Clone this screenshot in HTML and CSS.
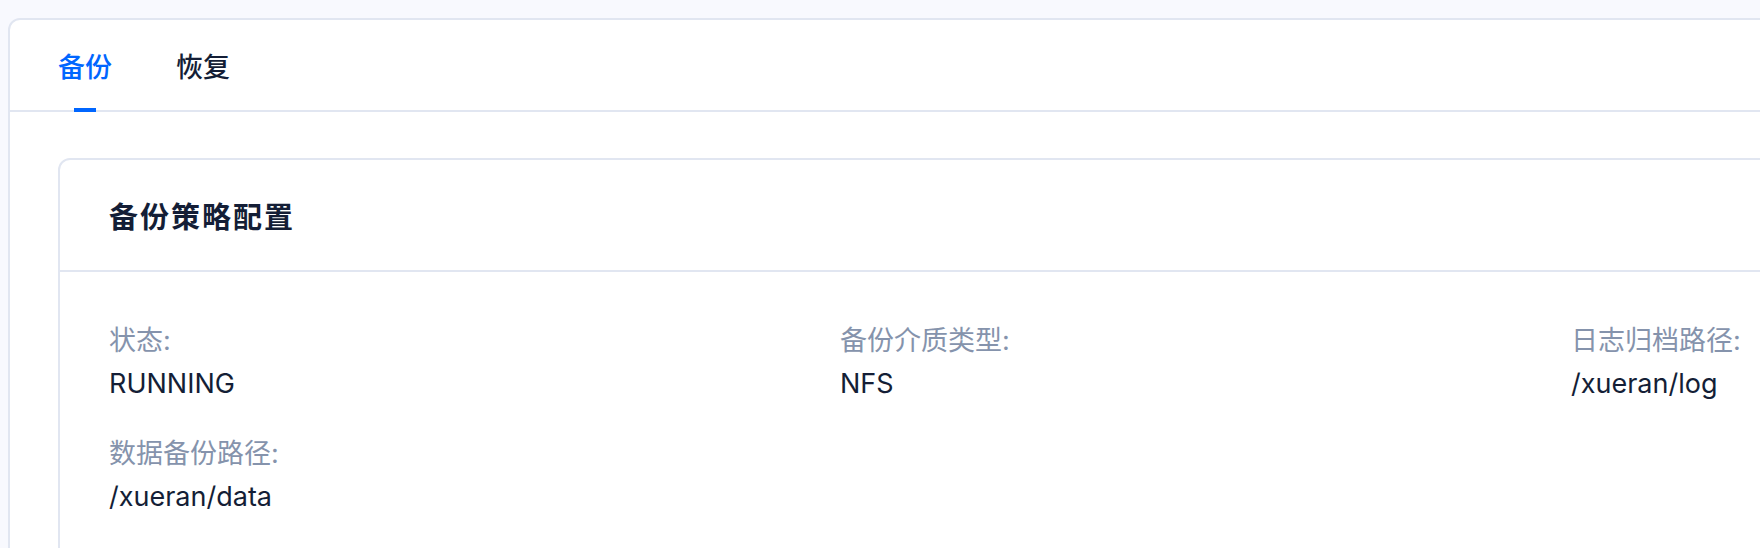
FILE: index.html
```html
<!DOCTYPE html>
<html lang="zh-CN">
<head>
<meta charset="utf-8">
<title>备份</title>
<link rel="stylesheet" href="styles.css">
</head>
<body>
<div class="panel">
  <div class="tabs">
    <div class="tab active">备份</div>
    <div class="tab">恢复</div>
  </div>
  <div class="content">
    <div class="card">
      <div class="card-header">
        <h2 class="card-title">备份策略配置</h2>
      </div>
      <div class="card-body">
        <div class="field">
          <div class="label">状态:</div>
          <div class="value">RUNNING</div>
        </div>
        <div class="field">
          <div class="label">备份介质类型:</div>
          <div class="value">NFS</div>
        </div>
        <div class="field">
          <div class="label">日志归档路径:</div>
          <div class="value">/xueran/log</div>
        </div>
        <div class="field">
          <div class="label">数据备份路径:</div>
          <div class="value">/xueran/data</div>
        </div>
      </div>
    </div>
  </div>
</div>
</body>
</html>
```

FILE: styles.css
```css
html, body {
  margin: 0;
  padding: 0;
  overflow: hidden;
}
body {
  background: #f8f9fe;
  padding: 18px 0 0 8px;
  font-family: "Inter", "Noto Sans CJK SC", sans-serif;
  color: #141e36;
  height: 548px;
  box-sizing: border-box;
}
.panel {
  width: 2400px;
  min-height: 600px;
  background: #ffffff;
  border: 2px solid #e1e6f1;
  border-radius: 12px;
}
.tabs {
  display: flex;
  gap: 64px;
  padding: 0 48px;
  height: 90px;
  border-bottom: 2px solid #e1e6f1;
}
.tab {
  position: relative;
  font-size: 27px;
  font-weight: 500;
  line-height: 90px;
  padding-top: 3px;
  box-sizing: border-box;
  height: 90px;
  color: #141e36;
}
.tab.active {
  color: #0066ff;
}
.tab.active::after {
  content: "";
  position: absolute;
  left: 50%;
  bottom: -2px;
  width: 22px;
  height: 4px;
  margin-left: -11px;
  background: #0066ff;
}
.content {
  padding: 46px 48px;
}
.card {
  border: 2px solid #e1e6f1;
  border-radius: 12px;
  background: #ffffff;
}
.card-header {
  height: 110px;
  display: flex;
  align-items: center;
  padding: 0 49px;
  border-bottom: 2px solid #e1e6f1;
}
.card-title {
  margin: 0;
  font-size: 29px;
  font-weight: 700;
  letter-spacing: 2px;
  color: #141e36;
}
.card-body {
  display: grid;
  grid-template-columns: repeat(3, 731px);
  row-gap: 30px;
  padding: 50px 49px;
}
.label {
  font-size: 27px;
  line-height: 38px;
  color: #8593ac;
}
.value {
  margin-top: 3px;
  font-size: 27px;
  line-height: 42px;
  color: #141e36;
}
```
